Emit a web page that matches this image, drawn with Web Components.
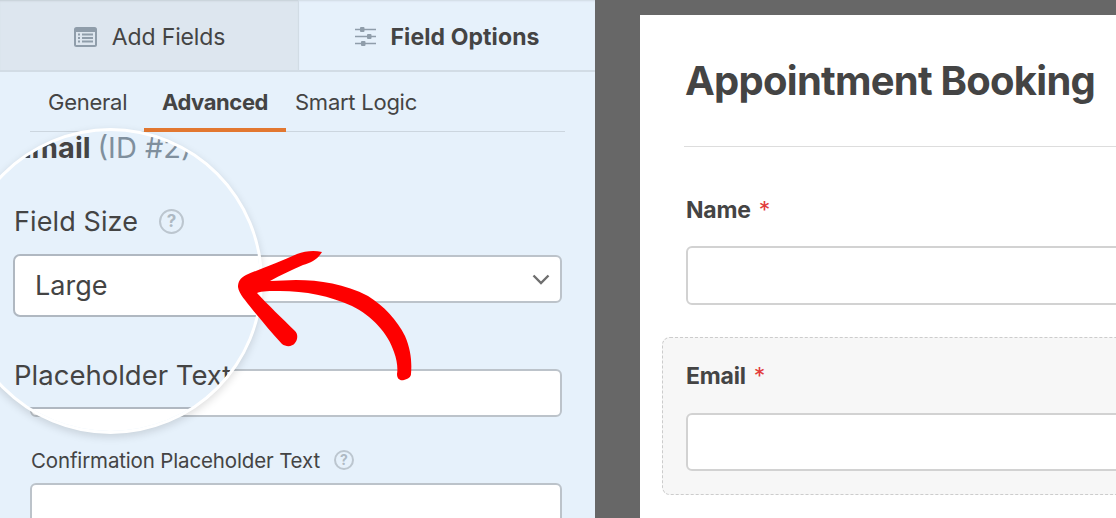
<!DOCTYPE html>
<html>
<head>
<meta charset="utf-8">
<style>
html, body { margin: 0; width: 1116px; height: 518px; overflow: hidden; background: #676767; }
body { display: flex; font-family: Inter, "Liberation Sans", sans-serif; color: #444; }
</style>
</head>
<body>
<wf-panel>
  <wf-tabs></wf-tabs>
  <wf-subtabs></wf-subtabs>
  <wf-options></wf-options>
  <wf-magnifier></wf-magnifier>
  <wf-arrow></wf-arrow>
</wf-panel>
<wf-preview>
  <wf-preview-field label="Name"></wf-preview-field>
  <wf-preview-field label="Email" selected></wf-preview-field>
</wf-preview>

<script>
const helpIcon = (size, font) => `<span style="display:inline-flex;align-items:center;justify-content:center;box-sizing:border-box;width:${size}px;height:${size}px;border:2px solid #bcc6cf;border-radius:50%;color:#aeb9c3;font-size:${font}px;font-weight:700;line-height:1">?</span>`

class WfPanel extends HTMLElement {
  constructor() {
    super()
    this.attachShadow({ mode: 'open' }).innerHTML = `
<style>
:host { display: flex; flex-direction: column; position: relative; flex: 0 0 595px; height: 518px; background: #e6f1fb; overflow: hidden; }
</style>
<slot></slot>`
  }
}

class WfTabs extends HTMLElement {
  constructor() {
    super()
    this.attachShadow({ mode: 'open' }).innerHTML = `
<style>
:host { display: flex; flex: none; height: 72px; box-sizing: border-box; border-bottom: 2px solid #d2dce5; font-size: 23px; letter-spacing: -0.15px; }
.tab { display: flex; align-items: center; justify-content: center; padding-top: 3px; box-sizing: border-box; }
.add { width: 299px; gap: 15px; padding-left: 1px; background: #dde6ef; border-right: 1px solid #d2dce5; box-shadow: inset 0 2px 2px -1px #c5ced6; font-weight: 400; }
.opt { flex: 1; gap: 14px; padding-left: 1px; font-weight: 700; letter-spacing: 0.1px; box-shadow: inset 0 2px 2px -1px #d0dae3; }
svg { display: block; }
</style>
<div class="tab add">
  <svg width="23" height="20" viewBox="0 0 23 20"><rect x="0" y="0" width="23" height="20" rx="2.5" fill="#8f9daa"/><rect x="2" y="5" width="19" height="13" fill="#dde6ef"/><path d="M4 7.5h2M8 7.5h11M4 11h2M8 11h11M4 14.5h2M8 14.5h11" stroke="#8f9daa" stroke-width="1.8"/></svg>
  <span>Add Fields</span>
</div>
<div class="tab opt">
  <svg width="21" height="21" viewBox="0 0 21 21"><path d="M0 3.5h21M0 10.5h21M0 17.5h21" stroke="#8f9daa" stroke-width="1.6"/><rect x="5" y="1" width="4.5" height="5" rx="1" fill="#8f9daa"/><rect x="12" y="8" width="4.5" height="5" rx="1" fill="#8f9daa"/><rect x="6" y="15" width="4.5" height="5" rx="1" fill="#8f9daa"/></svg>
  <span>Field Options</span>
</div>`
  }
}

class WfSubtabs extends HTMLElement {
  constructor() {
    super()
    this.attachShadow({ mode: 'open' }).innerHTML = `
<style>
:host { display: flex; flex: none; height: 60px; margin: 0 30px; box-sizing: border-box; border-bottom: 1px solid #ccd6df; font-size: 22px; letter-spacing: -0.25px; }
div { display: flex; align-items: center; box-sizing: border-box; height: 60px; margin-bottom: -1px; }
.g { width: 114px; padding-left: 18px; }
.a { width: 142px; justify-content: center; font-weight: 700; letter-spacing: -0.4px; border-bottom: 4px solid #e27730; padding-top: 4px; }
.s { padding-left: 9px; }
</style>
<div class="g">General</div><div class="a">Advanced</div><div class="s">Smart Logic</div>`
  }
}

class WfOptions extends HTMLElement {
  constructor() {
    super()
    this.attachShadow({ mode: 'open' }).innerHTML = `
<style>
:host { display: flex; flex: none; flex-direction: column; padding: 123px 33px 0 30px; }
.box { box-sizing: border-box; background: #fff; border: 2px solid #bcc3ca; border-radius: 6px; }
.sel { height: 48px; display: flex; align-items: center; justify-content: flex-end; padding-right: 10px; }
.inp { height: 48px; margin-top: 66px; }
label { display: flex; align-items: center; gap: 14px; margin: 32px 0 0 1px; height: 22px; font-size: 20.5px; letter-spacing: -0.15px; }
.conf { height: 60px; margin-top: 12px; }
</style>
<div class="box sel"><svg width="18" height="11" viewBox="0 0 18 11"><path d="M1.5 1.5L9 9l7.5-7.5" fill="none" stroke="#6f6f6f" stroke-width="2.4"/></svg></div>
<div class="box inp"></div>
<label>Confirmation Placeholder Text ${helpIcon(20, 14)}</label>
<div class="box conf"></div>`
  }
}

class WfMagnifier extends HTMLElement {
  constructor() {
    super()
    this.attachShadow({ mode: 'open' }).innerHTML = `
<style>
:host { display: block; position: absolute; left: -42px; top: 128px; width: 305px; height: 306px; box-sizing: border-box; border: 3px solid #fff; border-radius: 50%; background: #e6f1fb; box-shadow: 0 3px 8px #0002; overflow: hidden; }
.in { display: flex; flex-direction: column; padding: 0 0 0 53px; width: 340px; box-sizing: border-box; margin-top: -1px; }
.head { font-size: 29px; font-weight: 700; height: 35px; line-height: 35px; white-space: nowrap; }
.head span { font-weight: 400; color: #7f8f9d; }
.lbl { display: flex; align-items: center; gap: 21px; font-size: 27px; height: 34px; margin-top: 39px; letter-spacing: 0.1px; }
.sel { box-sizing: border-box; height: 63px; margin: 16px 0 0 -1px; background: #fff; border: 2px solid #b0b8c1; border-radius: 7px; font-size: 27px; display: flex; align-items: center; padding: 0 0 0 20px; }
.ph { font-size: 27.5px; height: 36px; margin-top: 41px; white-space: nowrap; }
.inp { box-sizing: border-box; height: 60px; margin: 13px 0 0 -1px; background: #fff; border: 2px solid #b0b8c1; border-radius: 7px; }
</style>
<div class="in">
  <div class="head">Email <span>(ID #2)</span></div>
  <div class="lbl">Field Size ${helpIcon(25, 17)}</div>
  <div class="sel">Large</div>
  <div class="ph">Placeholder Text</div>
  <div class="inp"></div>
</div>`
  }
}

class WfArrow extends HTMLElement {
  constructor() {
    super()
    this.attachShadow({ mode: 'open' }).innerHTML = `
<style>
:host { display: block; position: absolute; left: 0; top: 0; width: 595px; height: 518px; pointer-events: none; }
svg { display: block; }
</style>
<svg width="595" height="518" viewBox="0 0 595 518">
  <path fill="#fe0000" d="M322 252 C314 250 305 251 297 254 C280 262 262 268 246 275 C240 278 238 282 238 287 C239 294 246 301 252 309 C262 321 272 333 282 344 C286 347 292 347 295 343 C298 339 298 334 295 331 C282 318 268 305 257 293 C262 291 270 291 280 291 C305 291 330 296 352 306 C372 316 388 333 394 352 C397 360 398 368 397 374 C397 379 400 381 404 380 C408 379 411 377 411 374 C412 362 411 350 405 336 C397 320 384 306 368 296 C345 284 320 280 296 280 C287 280 279 281 270 281 C280 275 292 270 303 265 C311 263 318 259 322 252 Z"/>
</svg>`
  }
}

class WfPreview extends HTMLElement {
  constructor() {
    super()
    this.attachShadow({ mode: 'open' }).innerHTML = `
<style>
:host { display: block; flex: none; margin: 15px 0 0 45px; width: 476px; height: 503px; overflow: hidden; background: #fff; padding: 0 0 0 22px; box-sizing: border-box; }
h1 { margin: 0 0 0 23px; padding: 40px 0 0; height: 92px; box-sizing: border-box; font-size: 40px; line-height: 52px; font-weight: 700; letter-spacing: -0.75px; white-space: nowrap; }
hr { margin: 39px 0 49px 22px; border: 0; border-top: 1px solid #ddd; width: 500px; }
</style>
<h1>Appointment Booking</h1>
<hr>
<slot></slot>`
  }
}

class WfPreviewField extends HTMLElement {
  connectedCallback() {
    if (this.shadowRoot) return
    this.attachShadow({ mode: 'open' }).innerHTML = `
<style>
:host { display: block; box-sizing: border-box; width: 500px; padding: 0 0 0 23px; margin-bottom: 31px; border: 1.5px dashed transparent; border-right: 0; border-radius: 8px 0 0 8px; }
:host([selected]) { background: #f7f7f7; border-color: #ccc; padding-top: 25px; padding-bottom: 23px; margin-bottom: 0; }
:host([selected]) .inp { margin-top: 24px; height: 58px; }
.lbl { display: flex; height: 26px; line-height: 26px; font-size: 23px; font-weight: 700; letter-spacing: -0.2px; }
.lbl i { color: #e23c3c; font-style: normal; font-weight: 400; margin-left: 8px; }
.inp { box-sizing: border-box; height: 59px; margin-top: 23px; background: #fff; border: 2px solid #d2d2d2; border-radius: 6px; }
</style>
<div class="lbl">${this.getAttribute('label')}<i>*</i></div>
<div class="inp"></div>`
  }
}

customElements.define('wf-panel', WfPanel)
customElements.define('wf-tabs', WfTabs)
customElements.define('wf-subtabs', WfSubtabs)
customElements.define('wf-options', WfOptions)
customElements.define('wf-magnifier', WfMagnifier)
customElements.define('wf-arrow', WfArrow)
customElements.define('wf-preview', WfPreview)
customElements.define('wf-preview-field', WfPreviewField)
</script>
</body>
</html>
